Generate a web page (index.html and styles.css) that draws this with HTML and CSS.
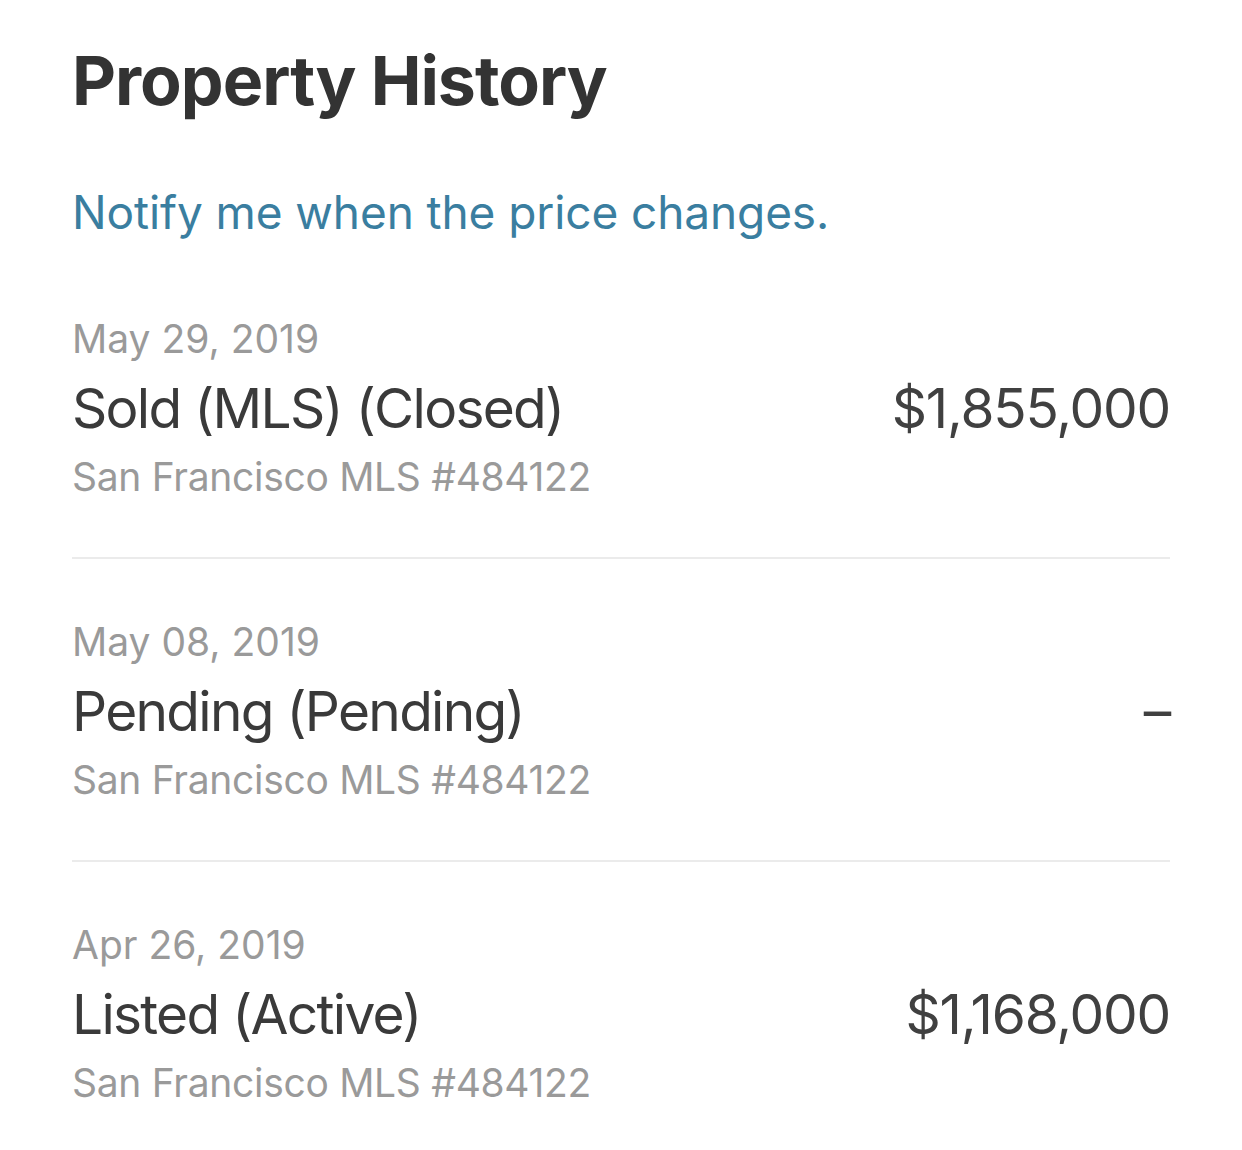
FILE: index.html
```html
<!DOCTYPE html>
<html lang="en">
<head>
<meta charset="utf-8">
<title>Property History</title>
<link rel="stylesheet" href="styles.css">
</head>
<body>
<main class="page">
  <h1 class="title">Property History</h1>
  <a class="notify" href="#">Notify me when the price changes.</a>
  <ul class="history">
    <li class="event">
      <div class="event-info">
        <div class="date">May 29, 2019</div>
        <div class="status">Sold (MLS) (Closed)</div>
        <div class="source">San Francisco MLS #484122</div>
      </div>
      <div class="price">$1,855,000</div>
    </li>
    <li class="event">
      <div class="event-info">
        <div class="date">May 08, 2019</div>
        <div class="status">Pending (Pending)</div>
        <div class="source">San Francisco MLS #484122</div>
      </div>
      <div class="price">–</div>
    </li>
    <li class="event">
      <div class="event-info">
        <div class="date">Apr 26, 2019</div>
        <div class="status">Listed (Active)</div>
        <div class="source">San Francisco MLS #484122</div>
      </div>
      <div class="price">$1,168,000</div>
    </li>
  </ul>
</main>
</body>
</html>
```
FILE: styles.css
```css
html, body {
  margin: 0;
  padding: 0;
  background: #ffffff;
}

body {
  font-family: Inter, "Noto Sans", "Liberation Sans", sans-serif;
  color: #333333;
}

.page {
  padding: 39px 72px 0 72px;
}

.title {
  margin: 0;
  font-size: 68px;
  line-height: 82px;
  font-weight: 700;
  letter-spacing: -1px;
  color: #333333;
}

.notify {
  display: block;
  margin-top: 63px;
  font-size: 46px;
  line-height: 56px;
  letter-spacing: -0.1px;
  color: #3a7ea0;
  text-decoration: none;
}

.history {
  list-style: none;
  margin: 16px 0 0 0;
  padding: 0;
}

.event {
  display: flex;
  justify-content: space-between;
  align-items: flex-start;
  padding: 59px 0 56px 0;
  border-bottom: 2px solid #ebebeb;
}

.event:last-child {
  border-bottom: none;
}

.date {
  font-size: 39px;
  line-height: 48px;
  color: #9a9a9a;
}

.status {
  margin-top: 12px;
  font-size: 55px;
  line-height: 66px;
  letter-spacing: -1.7px;
  color: #3a3a3a;
}

.source {
  margin-top: 12px;
  font-size: 39px;
  line-height: 48px;
  letter-spacing: -0.3px;
  color: #9a9a9a;
}

.price {
  margin-top: 60px;
  font-size: 55px;
  line-height: 66px;
  letter-spacing: -1.2px;
  color: #404040;
}
```
